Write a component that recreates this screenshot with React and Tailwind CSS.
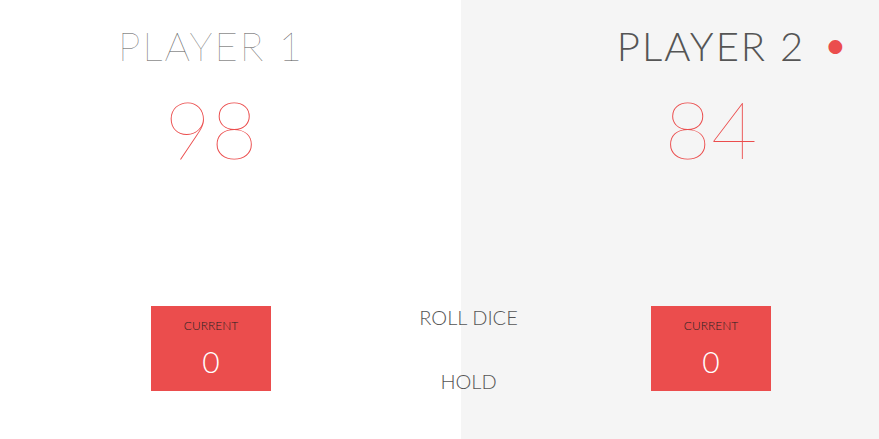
export default function App() {
  return (
    <div className="h-[439px] w-full overflow-hidden bg-white font-['Lato','Open_Sans',sans-serif] font-light leading-normal text-[#555]">
      <div className="relative ml-[-39px] mt-[-98px] flex h-[600px] w-[1000px]">
        {/* Player 1 */}
        <div className="h-[600px] w-1/2 p-[100px]">
          <div className="relative mt-5 mb-2.5 text-center text-[40px] font-thin uppercase leading-[48px] tracking-[2px]">
            Player 1
          </div>
          <div className="mb-[130px] text-center text-[80px] font-thin leading-[96px] text-[#EB4D4D]">98</div>
          <div className="mx-auto w-2/5 bg-[#EB4D4D] p-3 text-center text-white">
            <div className="mb-2.5 text-[12px] uppercase leading-[15px] text-[#222]">Current</div>
            <div className="text-[30px] leading-[36px]">0</div>
          </div>
        </div>

        {/* Player 2 (active) */}
        <div className="h-[600px] w-1/2 bg-[#f5f5f5] p-[100px]">
          <div className="relative mt-5 mb-2.5 text-center text-[40px] font-light uppercase leading-[48px] tracking-[2px]">
            Player 2
            <span className="absolute right-[10px] top-[-7px] text-[47px] leading-[56px] text-[#EB4D4D]">•</span>
          </div>
          <div className="mb-[130px] text-center text-[80px] font-thin leading-[96px] text-[#EB4D4D]">84</div>
          <div className="mx-auto w-2/5 bg-[#EB4D4D] p-3 text-center text-white">
            <div className="mb-2.5 text-[12px] uppercase leading-[15px] text-[#222]">Current</div>
            <div className="text-[30px] leading-[36px]">0</div>
          </div>
        </div>

        <button className="absolute left-1/2 top-[402px] w-[200px] -translate-x-1/2 px-1.5 py-px text-[20px] font-light uppercase leading-[24px] text-[#555]">
          <span className="mr-[15px] inline-block"></span>Roll dice
        </button>
        <button className="absolute left-1/2 top-[466px] w-[200px] -translate-x-1/2 px-1.5 py-px text-[20px] font-light uppercase leading-[24px] text-[#555]">
          <span className="mr-[15px] inline-block"></span>Hold
        </button>
      </div>
    </div>
  );
}
